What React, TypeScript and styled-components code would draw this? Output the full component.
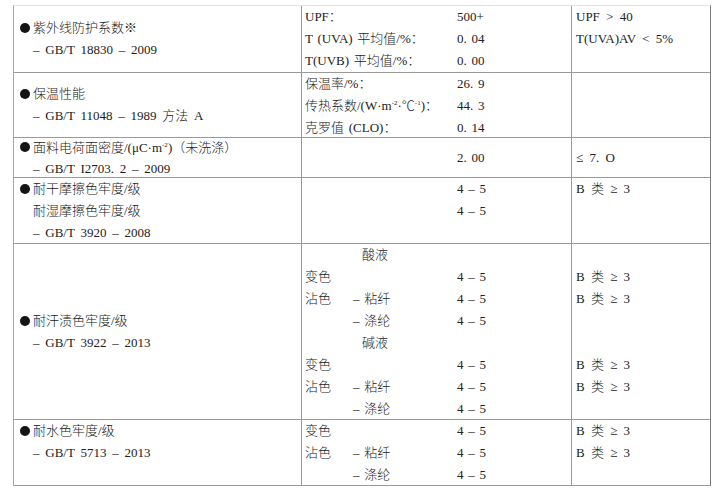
import React from "react";
import styled, { createGlobalStyle } from "styled-components";

const Global = createGlobalStyle`
  html, body { margin: 0; padding: 0; background: #fff; }
  body {
    font-family: "Liberation Serif", "Noto Sans CJK SC", serif;
    font-size: 13px;
    font-weight: 300;
    color: #222;
  }
`;

const Table = styled.div`
  box-sizing: border-box;
  width: 698px;
  margin: 5px 0 0 13px;
  border-top: 1px solid #e2e2e2;
  border-left: 1px solid #a8a8a8;
  border-right: 1px solid #7c7c7c;
`;

const Row = styled.div<{ $h: number }>`
  display: grid;
  grid-template-columns: 288px 270px 138px;
  height: ${(p) => p.$h + 1}px;
  box-sizing: border-box;
  border-bottom: 1px solid #9a9a9a;
`;

const Cell = styled.div<{ $align: "center" | "start"; $pad: number; $ws: number; $last?: boolean }>`
  display: flex;
  flex-direction: column;
  justify-content: ${(p) => (p.$align === "center" ? "center" : "flex-start")};
  padding-left: ${(p) => p.$pad}px;
  word-spacing: ${(p) => p.$ws}px;
  border-right: ${(p) => (p.$last ? "none" : "1px solid #9a9a9a")};
  overflow: hidden;
  min-width: 0;
`;

const TextLine = styled.div<{ $lh: number; $indent?: boolean }>`
  height: ${(p) => p.$lh}px;
  line-height: ${(p) => p.$lh}px;
  white-space: nowrap;
  padding-left: ${(p) => (p.$indent ? 13 : 0)}px;
  display: flex;
  align-items: center;
`;

const Dot = styled.span`
  display: inline-block;
  width: 10px;
  height: 10px;
  border-radius: 50%;
  background: #141414;
  margin-right: 3px;
  flex: none;
`;

const MidLine = styled.div<{ $lh: number }>`
  display: grid;
  grid-template-columns: 48px 104px 1fr;
  height: ${(p) => p.$lh}px;
  line-height: ${(p) => p.$lh}px;
  white-space: nowrap;
`;

const Label = styled.span<{ $span?: boolean }>`
  grid-column: ${(p) => (p.$span ? "1 / 3" : "1 / 2")};
`;

const SubLabel = styled.span<{ $head?: boolean }>`
  grid-column: 2 / 3;
  padding-left: ${(p) => (p.$head ? 9 : 0)}px;
`;

const Value = styled.span`
  grid-column: 3 / 4;
`;

const Sup = styled.sup`
  font-size: 7px;
  line-height: 0;
  vertical-align: 5px;
`;

type Left = { text: React.ReactNode; bullet?: boolean };
type Mid = { a?: React.ReactNode; b?: React.ReactNode; v?: React.ReactNode; head?: string };
type RowData = {
  h: number;
  lh: number;
  leftAlign: "center" | "start";
  midAlign: "center" | "start";
  rightAlign: "center" | "start";
  left: Left[];
  mid: Mid[];
  right: string[];
};

const V = "4 – 5";
const B3 = "B 类 ≥ 3";

const rows: RowData[] = [
  {
    h: 66,
    lh: 22,
    leftAlign: "center",
    midAlign: "start",
    rightAlign: "start",
    left: [
      { text: "紫外线防护系数※", bullet: true },
      { text: "– GB/T 18830 – 2009" },
    ],
    mid: [
      { a: "UPF：", v: "500+" },
      { a: "T (UVA) 平均值/%：", v: "0. 04" },
      { a: "T(UVB) 平均值/%：", v: "0. 00" },
    ],
    right: ["UPF > 40", "T(UVA)AV < 5%"],
  },
  {
    h: 64,
    lh: 22,
    leftAlign: "center",
    midAlign: "start",
    rightAlign: "start",
    left: [
      { text: "保温性能", bullet: true },
      { text: "– GB/T 11048 – 1989 方法 A" },
    ],
    mid: [
      { a: "保温率/%：", v: "26. 9" },
      {
        a: (
          <>
            传热系数/(W·m<Sup>-2</Sup>·℃<Sup>-1</Sup>)：
          </>
        ),
        v: "44. 3",
      },
      { a: "克罗值 (CLO)：", v: "0. 14" },
    ],
    right: [],
  },
  {
    h: 39,
    lh: 21,
    leftAlign: "center",
    midAlign: "center",
    rightAlign: "center",
    left: [
      {
        text: (
          <>
            面料电荷面密度/(μC·m<Sup>-2</Sup>)（未洗涤）
          </>
        ),
        bullet: true,
      },
      { text: "– GB/T I2703. 2 – 2009" },
    ],
    mid: [{ v: "2. 00" }],
    right: ["≤ 7. O"],
  },
  {
    h: 65,
    lh: 22,
    leftAlign: "start",
    midAlign: "start",
    rightAlign: "start",
    left: [
      { text: "耐干摩擦色牢度/级", bullet: true },
      { text: "耐湿摩擦色牢度/级" },
      { text: "– GB/T 3920 – 2008" },
    ],
    mid: [{ v: V }, { v: V }],
    right: [B3],
  },
  {
    h: 175,
    lh: 22,
    leftAlign: "center",
    midAlign: "start",
    rightAlign: "start",
    left: [
      { text: "耐汗渍色牢度/级", bullet: true },
      { text: "– GB/T 3922 – 2013" },
    ],
    mid: [
      { head: "酸液" },
      { a: "变色", v: V },
      { a: "沾色", b: "– 粘纤", v: V },
      { b: "– 涤纶", v: V },
      { head: "碱液" },
      { a: "变色", v: V },
      { a: "沾色", b: "– 粘纤", v: V },
      { b: "– 涤纶", v: V },
    ],
    right: ["", B3, B3, "", "", B3, B3],
  },
  {
    h: 65,
    lh: 22,
    leftAlign: "start",
    midAlign: "start",
    rightAlign: "start",
    left: [
      { text: "耐水色牢度/级", bullet: true },
      { text: "– GB/T 5713 – 2013" },
    ],
    mid: [
      { a: "变色", v: V },
      { a: "沾色", b: "– 粘纤", v: V },
      { b: "– 涤纶", v: V },
    ],
    right: [B3, B3],
  },
];

export default function App() {
  return (
    <>
      <Global />
      <Table>
        {rows.map((r, i) => (
          <Row key={i} $h={r.h}>
            <Cell $align={r.leftAlign} $pad={6} $ws={2.5}>
              {r.left.map((l, j) => (
                <TextLine key={j} $lh={r.lh} $indent={!l.bullet}>
                  {l.bullet && <Dot />}
                  <span>{l.text}</span>
                </TextLine>
              ))}
            </Cell>
            <Cell $align={r.midAlign} $pad={3} $ws={1.5}>
              {r.mid.map((m, j) => (
                <MidLine key={j} $lh={r.lh}>
                  {m.head ? (
                    <SubLabel $head>{m.head}</SubLabel>
                  ) : (
                    <>
                      {m.a && <Label $span={!m.b}>{m.a}</Label>}
                      {m.b && <SubLabel>{m.b}</SubLabel>}
                      {m.v && <Value>{m.v}</Value>}
                    </>
                  )}
                </MidLine>
              ))}
            </Cell>
            <Cell $align={r.rightAlign} $pad={4} $ws={3} $last>
              {r.right.map((t, j) => (
                <TextLine key={j} $lh={r.lh}>
                  {t}
                </TextLine>
              ))}
            </Cell>
          </Row>
        ))}
      </Table>
    </>
  );
}
